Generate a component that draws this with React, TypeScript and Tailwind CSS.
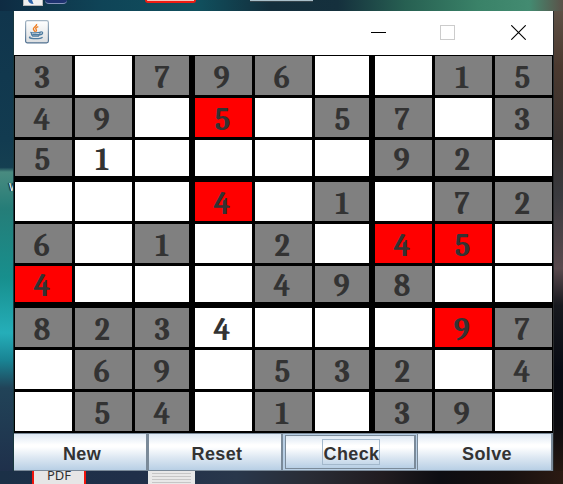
import React from 'react';

type Kind = 'w' | 'g' | 'r';

// Each token is a digit (or "." for blank) followed by its fill: w white, g grey, r red.
const BOARD: string[] = [
  '3g .w 7g 9g 6g .w .w 1g 5g',
  '4g 9g .w 5r .w 5g 7g .w 3g',
  '5g 1w .w .w .w .w 9g 2g .w',
  '.w .w .w 4r .w 1g .w 7g 2g',
  '6g .w 1g .w 2g .w 4r 5r .w',
  '4r .w .w .w 4g 9g 8g .w .w',
  '8g 2g 3g 4w .w .w .w 9r 7g',
  '.w 6g 9g .w 5g 3g 2g .w 4g',
  '.w 5g 4g .w 1g .w 3g 9g .w',
];

const FILL: Record<Kind, string> = {
  w: 'bg-white',
  g: 'bg-[#808080]',
  r: 'bg-[#ff0000]',
};

function Cell({ token, row, col }: { token: string; row: number; col: number }) {
  const digit = token[0] === '.' ? '' : token[0];
  const kind = token[1] as Kind;
  const narrow = col === 2 || col === 5;
  const short = row === 2 || row === 5;
  return (
    <div
      className={`flex items-center justify-center text-[32px] leading-none font-bold text-[#333333] ${FILL[kind]} ${
        narrow ? 'mr-[3px]' : 'pr-[3px]'
      } ${short ? 'mb-[3px] pt-[4px]' : 'pt-[5px]'}`}
    >
      <span className="scale-x-[0.95]">{digit}</span>
    </div>
  );
}

function Board() {
  return (
    <div
      className="grid h-[378px] grid-cols-[repeat(9,57px)] grid-rows-[repeat(9,39px)] gap-[3px] bg-black pt-px pl-px"
      style={{ fontFamily: 'Cambria, Caladea, "DejaVu Serif", serif' }}
    >
      {BOARD.flatMap((line, row) =>
        line.split(' ').map((token, col) => <Cell key={`${row}-${col}`} token={token} row={row} col={col} />),
      )}
    </div>
  );
}

function JavaIcon() {
  return (
    <svg width="24" height="24" viewBox="0 0 24 24" fill="none">
      <defs>
        <linearGradient id="tile" x1="0" y1="0" x2="0" y2="1">
          <stop offset="0" stopColor="#ffffff" />
          <stop offset="1" stopColor="#dcdee0" />
        </linearGradient>
        <linearGradient id="rim" x1="0" y1="0" x2="0" y2="1">
          <stop offset="0" stopColor="#a5b6c4" />
          <stop offset="1" stopColor="#507090" />
        </linearGradient>
      </defs>
      <rect x="0.6" y="0.6" width="22.8" height="22.3" rx="1.8" fill="url(#tile)" stroke="url(#rim)" strokeWidth="1.2" />
      <path d="M11.600 4c.8 2.200-3.800 3.200-3.200 5.100.2 1 1 1.600 1.500 2.600M13.300 6.600c-2.600.8-3 1.900-2.100 3 .6.8.2 1.500-.6 2.100" stroke="#ee7d22" strokeWidth="1.400" />
      <path d="M5.300 12.200c2 .9 8.200.8 10.200-.2M6.200 12.600c0 1.900.8 3.200 1.500 3.500h5.800c.8-.5 1.500-2 1.700-3.700M15.200 12c3.300-.9 3.400 2.200-.6 3M7.300 14.300c2 .5 4.700.5 6.700 0" stroke="#4f7ca0" strokeWidth="1.200" />
      <path d="M5.500 16.900c-2.200.7-.6 1.500 2.800 1.700 3.600.2 7.800-.1 9.300-1.300" stroke="#4f7ca0" strokeWidth="1.300" />
    </svg>
  );
}

function TitleBar() {
  return (
    <div className="flex h-11 items-start justify-between bg-white pt-[9px] pr-[27px] pl-[11px]">
      <JavaIcon />
      <div className="mt-[5px] flex h-[15px]">
        <svg width="16" height="15" className="mr-[53px]">
          <path d="M0 7.500h15" stroke="#000" />
        </svg>
        <svg width="15" height="15" className="mr-[56px]">
          <rect x="0.500" y="0.500" width="14" height="14" fill="none" stroke="#cccccc" />
        </svg>
        <svg width="15" height="15">
          <path d="M0.300 0.300l14.400 14.400M14.700 0.300l-14.400 14.400" stroke="#000" strokeWidth="1.100" />
        </svg>
      </div>
    </div>
  );
}

const FACE = 'bg-[linear-gradient(#dde8f3_0%,#ffffff_30%,#ffffff_36%,#dce7f2_66%,#b8cfe5_100%)]';

function PlainButton({ label, className }: { label: string; className: string }) {
  return (
    <button className={`flex items-center justify-center border-y border-[#7a8a99] pt-[3px] ${FACE} ${className}`}>
      {label}
    </button>
  );
}

function ButtonBar() {
  return (
    <div
      className="flex h-[38px] text-[18px] leading-none font-bold tracking-[0.4px] text-[#333333]"
      style={{ fontFamily: '"Liberation Sans", Arial, sans-serif' }}
    >
      <PlainButton label="New" className="w-[134px] border-r-2 pl-[4px]" />
      <PlainButton label="Reset" className="w-[135px] border-r-2 border-l pl-[4px]" />
      <div className="w-[134px] border-y border-[#7a8a99] bg-[#b8cfe5] py-px pr-px pl-[2px]">
        <button className={`flex h-full w-full items-center justify-center border-t border-r-2 border-b border-l border-[#7a8a99] pl-[2px] ${FACE}`}>
          <span className="flex h-[26px] w-[58px] items-center justify-center border border-[#a3b8cc] pt-[3px] pl-px">Check</span>
        </button>
      </div>
      <PlainButton label="Solve" className="w-[136px] border-r-2 border-l pl-[5px]" />
    </div>
  );
}

// Strip of desktop above the window, with the bottoms of a few shortcuts.
function TopStrip() {
  return (
    <div className="flex h-[11px] items-start bg-[linear-gradient(90deg,#0e2b42_0%,#0f4457_18%,#10505e_35%,#132e3c_48%,#15303d_60%,#276052_72%,#3a8268_85%,#438b71_94%,#5b5148_100%)]">
      <div className="ml-[23px] flex h-[6px] w-5 justify-start border-x border-b border-[#b9b9b9] bg-[#f0f0f0] pl-[4px]">
        <svg width="8" height="5">
          <path d="M0 0h4l1.500 4C2.500 4 .5 2.500 0 0z" fill="#2e63a9" />
        </svg>
      </div>
      <div className="ml-[2px] h-[4px] w-[22px] rounded-b-full border-b border-[#8694ba] bg-[#1e3270]" />
      <div className="ml-[78px] h-[3px] w-[51px] rounded-b-[3px] border-x-2 border-b-2 border-[#ee1c12] bg-[#f1c5bd]" />
      <div className="ml-[54px] h-[2px] w-[63px] border-b border-[#35444c] bg-[#a9bfca]" />
    </div>
  );
}

// Strip of desktop below the window, with the tops of two document shortcuts.
function BottomStrip() {
  return (
    <div className="flex h-[13px] items-start overflow-hidden bg-[linear-gradient(90deg,#1b3047_0%,#202f49_24%,#29374b_42%,#292c35_55%,#211c20_68%,#0d0d12_78%,#17100f_90%,#2b1a13_100%)]">
      <div
        className="ml-8 flex h-[13px] w-[54px] justify-center border-x-2 border-[#f0140c] bg-[#e6e6e6] text-[13px] leading-[9px] text-[#303030]"
        style={{ fontFamily: '"Noto Sans", sans-serif' }}
      >
        PDF
      </div>
      <div className="ml-[62px] h-[13px] w-[47px] border-x-4 border-[#e8e8e8] bg-[repeating-linear-gradient(#e8e8e8_0_2px,#c6c6c6_2px_3px)]" />
    </div>
  );
}

export default function App() {
  return (
    <div className="flex h-[484px] w-[563px] flex-col overflow-hidden bg-[#101820]">
      <TopStrip />
      <div className="flex h-[460px]">
        <div className="flex w-[14px] items-start overflow-hidden border-r border-[#18383e] bg-[linear-gradient(#10354c_0%,#123b50_28%,#153f51_34%,#498b80_35%,#257d78_43%,#178f8d_58%,#25aeb9_70%,#198393_76%,#214358_82%,#1f304b_100%)]">
          <span
            className="mt-[170px] ml-[9px] text-[11px] leading-none text-white"
            style={{ fontFamily: '"Open Sans", sans-serif', textShadow: '-1px 0 1px #000' }}
          >
            W
          </span>
        </div>
        <main className="w-[539px] bg-black">
          <TitleBar />
          <Board />
          <ButtonBar />
        </main>
        <div className="w-[10px] border-l border-[#26292b] bg-[linear-gradient(#5d5045_0%,#4b392f_12%,#37302e_28%,#393a3e_40%,#59494d_56%,#17191e_64%,#080b13_78%,#0c0c10_90%,#261811_100%)]" />
      </div>
      <BottomStrip />
    </div>
  );
}
